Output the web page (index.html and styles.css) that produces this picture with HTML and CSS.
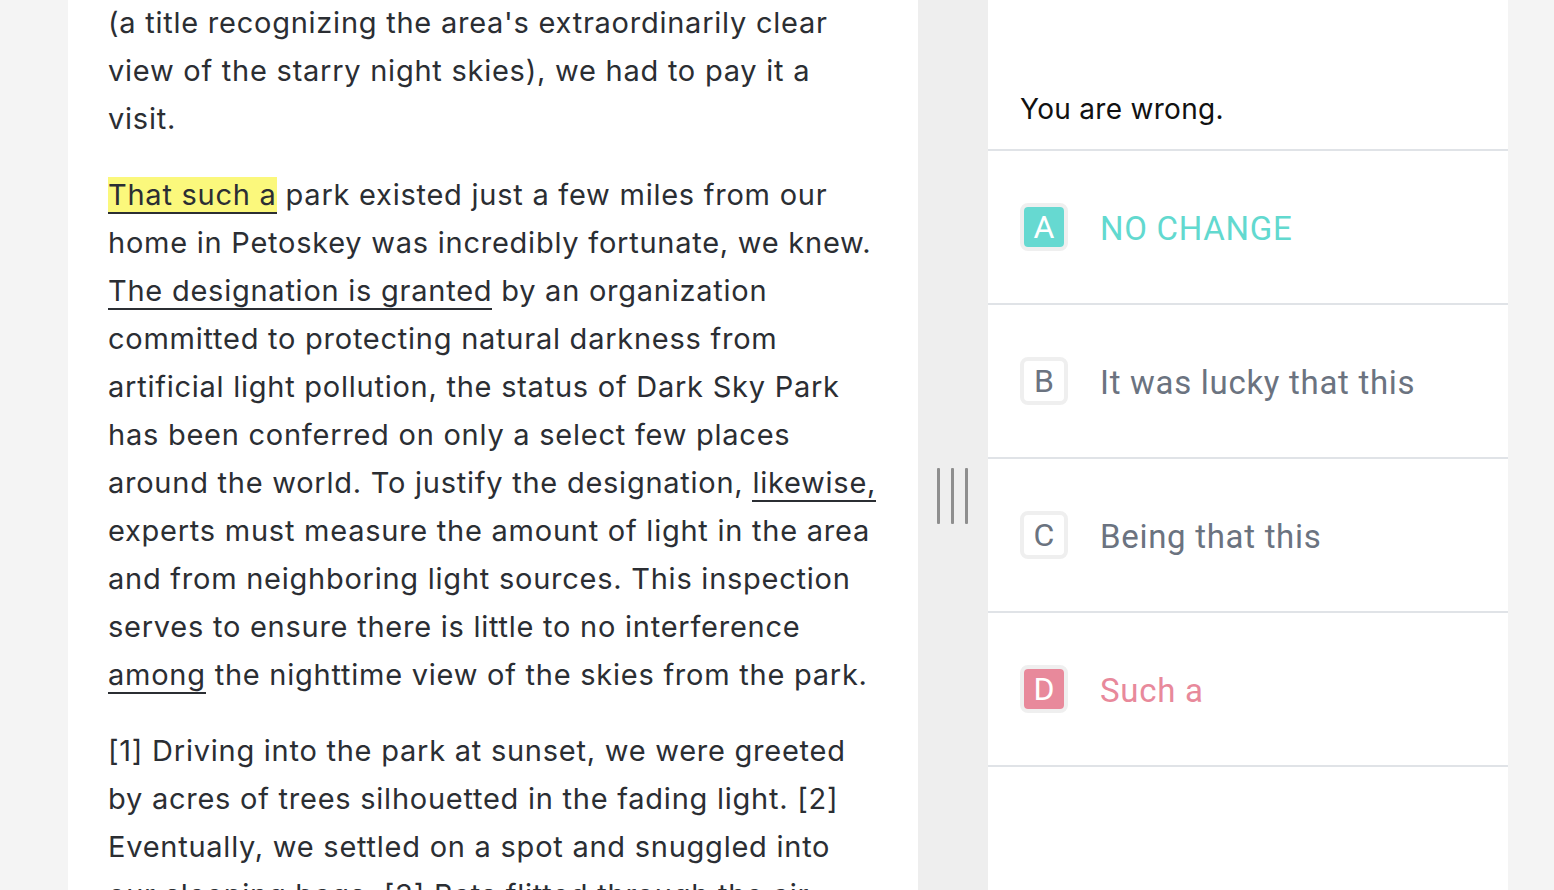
FILE: index.html
```html
<!DOCTYPE html>
<html lang="en">
<head>
<meta charset="utf-8">
<title>Passage question</title>
<link rel="stylesheet" href="styles.css">
</head>
<body>
<div class="layout">
  <div class="gutter"></div>
  <article class="passage">
    <p>(a title recognizing the area's extraordinarily clear view of the starry night skies), we had to pay it a visit.</p>
    <p><span class="mark active">That such a</span> park existed just a few miles from our home in Petoskey was incredibly fortunate, we knew. <span class="mark">The designation is granted</span> by an organization committed to protecting natural darkness from artificial light pollution, the status of Dark Sky Park has been conferred on only a select few places around the world. To justify the designation, <span class="mark">likewise,</span> experts must measure the amount of light in the area and from neighboring light sources. This inspection serves to ensure there is little to no interference <span class="mark">among</span> the nighttime view of the skies from the park.</p>
    <p>[1] Driving into the park at sunset, we were greeted by acres of trees silhouetted in the fading light. [2] Eventually, we settled on a spot and snuggled into our sleeping bags. [3] Bats flitted through the air above us while crickets sang in the tall grass nearby.</p>
  </article>
  <div class="divider">
    <div class="handle"><span></span><span></span><span></span></div>
  </div>
  <section class="answers">
    <div class="feedback">You are wrong.</div>
    <div class="option correct">
      <span class="badge"><span class="letter">A</span></span>
      <span class="option-text">NO CHANGE</span>
    </div>
    <div class="option">
      <span class="badge"><span class="letter">B</span></span>
      <span class="option-text">It was lucky that this</span>
    </div>
    <div class="option">
      <span class="badge"><span class="letter">C</span></span>
      <span class="option-text">Being that this</span>
    </div>
    <div class="option wrong">
      <span class="badge"><span class="letter">D</span></span>
      <span class="option-text">Such a</span>
    </div>
  </section>
  <div class="gutter"></div>
</div>
</body>
</html>
```
FILE: styles.css
```css
html, body {
  margin: 0;
  padding: 0;
}
body {
  background: #f4f4f4;
  font-family: "Inter", "Noto Sans", sans-serif;
  overflow: hidden;
}
.layout {
  display: flex;
  height: 890px;
  overflow: hidden;
}
.gutter {
  width: 68px;
  flex: none;
  background: #f4f4f4;
}
.gutter:last-child {
  width: 46px;
}
.passage {
  width: 774px;
  flex: none;
  background: #ffffff;
  padding: 0 36px 0 40px;
  color: #2b2e33;
  font-size: 29px;
  letter-spacing: 0.75px;
  line-height: 48px;
  overflow: hidden;
}
.passage p {
  margin: -1px 0 29px 0;
}
.mark {
  border-bottom: 2px solid #2b2e33;
}
.mark.active {
  background: #fbf87c;
}
.divider {
  width: 70px;
  flex: none;
  background: #eeeeee;
  display: flex;
  flex-direction: column;
  align-items: center;
  padding-top: 468px;
  box-sizing: border-box;
}
.handle {
  display: flex;
  gap: 11px;
  margin-left: -1px;
}
.handle span {
  width: 3px;
  height: 56px;
  background: #8e8e8e;
  border-radius: 1px;
}
.answers {
  width: 520px;
  flex: none;
  background: #ffffff;
  display: flex;
  flex-direction: column;
}
.feedback {
  height: 151px;
  box-sizing: border-box;
  border-bottom: 2px solid #e0e3e7;
  display: flex;
  align-items: flex-end;
  padding: 0 0 23px 32px;
  font-size: 28px;
  letter-spacing: 0.3px;
  line-height: 34px;
  color: #111111;
}
.option {
  height: 154px;
  box-sizing: border-box;
  border-bottom: 2px solid #e0e3e7;
  display: flex;
  align-items: center;
  padding-left: 32px;
  gap: 32px;
  font-family: "Roboto", "Noto Sans", sans-serif;
  color: #6b7380;
}
.badge {
  width: 48px;
  height: 48px;
  box-sizing: border-box;
  border: 4px solid #efefef;
  border-radius: 8px;
  display: flex;
}
.letter {
  flex: 1;
  border-radius: 4px;
  display: flex;
  align-items: center;
  justify-content: center;
  font-size: 32px;
  line-height: 1;
}
.option-text {
  font-size: 33px;
  letter-spacing: 0.7px;
  line-height: 40px;
  padding-top: 3px;
}
.option.correct {
  color: #62d9cf;
}
.option.correct .letter {
  background: #66d9d1;
  color: #ffffff;
}
.option.wrong {
  color: #e8899b;
}
.option.wrong .letter {
  background: #e8899b;
  color: #ffffff;
}
```
